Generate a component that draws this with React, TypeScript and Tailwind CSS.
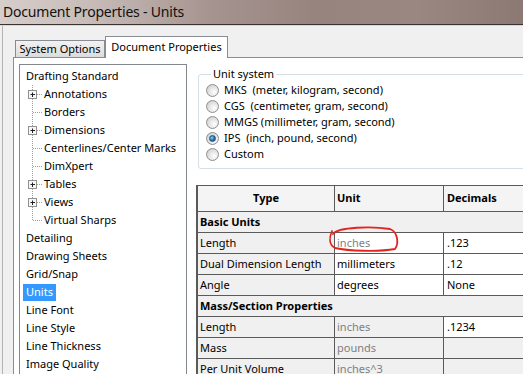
import React from "react";

type TreeItem = { label: string; child?: boolean; plus?: boolean; last?: boolean; selected?: boolean };

const tree: TreeItem[] = [
  { label: "Drafting Standard" },
  { label: "Annotations", child: true, plus: true },
  { label: "Borders", child: true },
  { label: "Dimensions", child: true, plus: true },
  { label: "Centerlines/Center Marks", child: true },
  { label: "DimXpert", child: true },
  { label: "Tables", child: true, plus: true },
  { label: "Views", child: true, plus: true },
  { label: "Virtual Sharps", child: true, last: true },
  { label: "Detailing" },
  { label: "Drawing Sheets" },
  { label: "Grid/Snap" },
  { label: "Units", selected: true },
  { label: "Line Font" },
  { label: "Line Style" },
  { label: "Line Thickness" },
  { label: "Image Quality" },
];

const units = [
  { label: "MKS  (meter, kilogram, second)" },
  { label: "CGS  (centimeter, gram, second)" },
  { label: "MMGS (millimeter, gram, second)" },
  { label: "IPS  (inch, pound, second)", checked: true },
  { label: "Custom" },
];

type Row =
  | { section: string }
  | { type: string; unit: string; unitGray?: boolean; unitBg?: boolean; dec: string; decBg?: boolean };

const rows: Row[] = [
  { section: "Basic Units" },
  { type: "Length", unit: "inches", unitGray: true, dec: ".123" },
  { type: "Dual Dimension Length", unit: "millimeters", dec: ".12" },
  { type: "Angle", unit: "degrees", dec: "None" },
  { section: "Mass/Section Properties" },
  { type: "Length", unit: "inches", unitGray: true, unitBg: true, dec: ".1234" },
  { type: "Mass", unit: "pounds", unitGray: true, unitBg: true, dec: "", decBg: true },
  { type: "Per Unit Volume", unit: "inches^3", unitGray: true, unitBg: true, dec: "", decBg: true },
];

// dotted tree connector, with optional expand box
const Connector = ({ plus, last }: { plus?: boolean; last?: boolean }) => (
  <svg width="24" height="18" className="shrink-0">
    <line x1="12.5" y1="0" x2="12.5" y2={last ? 9 : 18} stroke="#a0a0a0" strokeDasharray="1 1" />
    <line x1="13" y1="9.5" x2="23" y2="9.5" stroke="#a0a0a0" strokeDasharray="1 1" />
    {plus && (
      <g>
        <rect x="8.5" y="5.5" width="8" height="8" fill="#f7f7f7" stroke="#919191" />
        <line x1="10.5" y1="9.5" x2="15" y2="9.5" stroke="#222" />
        <line x1="12.5" y1="7.5" x2="12.5" y2="12" stroke="#222" />
      </g>
    )}
  </svg>
);

const Radio = ({ checked }: { checked?: boolean }) => (
  <span className="w-[13px] h-[13px] rounded-full border border-[#8e8f8f] bg-[radial-gradient(circle_at_65%_65%,#ffffff_0%,#e6e6e6_45%,#c4c4c4_100%)] flex items-center justify-center shrink-0">
    {checked && (
      <span className="w-[7px] h-[7px] rounded-full border border-[#1d4f7a] bg-[radial-gradient(circle_at_35%_35%,#8fd0f5_0%,#2a86c8_45%,#0e3f6e_100%)]" />
    )}
  </span>
);

export default function App() {
  return (
    <div className="relative w-[523px] h-[374px] overflow-hidden bg-[#f0f0f0] font-['Noto_Sans',sans-serif] text-[11px] text-black flex flex-col">
      {/* title bar */}
      <div className="h-[24px] shrink-0 flex items-center pl-[3px] bg-[linear-gradient(90deg,#d6cecb_0%,#c7bbb7_18%,#a69490_40%,#97847f_60%,#9a8782_80%,#8c7974_100%)]">
        <span className="text-[14px] leading-none text-[#111] tracking-[-0.2px]">Document Properties - Units</span>
      </div>
      <div className="h-px bg-[#3a3131] shrink-0" />
      <div className="h-px bg-[#ddd6d4] shrink-0" />

      <div className="flex-1 flex flex-col ml-[2px] border-l border-[#b4b4b4]">
        {/* tabs */}
        <div className="h-[31px] shrink-0 flex items-end pl-[12px]">
          <div className="h-[17px] w-[90px] border border-b-0 border-[#898c95] bg-[linear-gradient(#f2f2f2,#dcdcdc)] flex items-center justify-center">
            System Options
          </div>
          <div className="relative z-10 -mb-px h-[22px] w-[123px] border border-b-0 border-[#898c95] bg-white flex items-center justify-center pb-[1px]">
            Document Properties
          </div>
        </div>

        {/* panel */}
        <div className="flex-1 ml-[10px] border-l border-t border-[#898c95] bg-white flex pt-[6px] pl-[5px]">
          {/* tree */}
          <div className="w-[168px] shrink-0 border border-[#828790] pt-[2px] self-start h-[330px]">
            {tree.map((t, i) =>
              t.child ? (
                <div key={i} className="h-[18px] flex items-center">
                  <Connector plus={t.plus} last={t.last} />
                  <span className="whitespace-nowrap">{t.label}</span>
                </div>
              ) : (
                <div key={i} className="h-[18px] flex items-center pl-[3px]">
                  <span
                    className={`px-[3px] h-[17px] flex items-center whitespace-nowrap ${
                      t.selected ? "bg-[#3399ff] text-white" : ""
                    }`}
                  >
                    {t.label}
                  </span>
                </div>
              )
            )}
          </div>

          {/* right side */}
          <div className="ml-[9px] flex flex-col">
            <fieldset className="ml-[2px] mt-[2px] w-[340px] border border-[#d5dfe5] rounded-[3px] pl-[7px] pb-[6px]">
              <legend className="ml-[5px] px-[2px] leading-[16px]">Unit system</legend>
              {units.map((u, i) => (
                <div key={i} className="h-[16px] flex items-center gap-[5px]">
                  <Radio checked={u.checked} />
                  <span className="whitespace-pre">{u.label}</span>
                </div>
              ))}
            </fieldset>

            <div className="mt-[16px] w-[360px] border-l-2 border-t border-[#5a5a5a] grid grid-cols-[137px_109px_114px]">
              <div className="h-[26px] border-r border-b border-[#5a5a5a] bg-[#f4f4f4] flex items-center justify-center font-bold">
                Type
              </div>
              <div className="h-[26px] border-r border-b border-[#5a5a5a] bg-[#f4f4f4] flex items-center pl-[2px] font-bold">
                Unit
              </div>
              <div className="h-[26px] border-b border-[#5a5a5a] bg-[#f4f4f4] flex items-center pl-[3px] font-bold">
                Decimals
              </div>
              {rows.map((r, i) =>
                "section" in r ? (
                  <div
                    key={i}
                    className="col-span-3 h-[21px] border-b border-[#5a5a5a] bg-[#f0f0f0] flex items-center pl-[2px] font-bold"
                  >
                    {r.section}
                  </div>
                ) : (
                  <React.Fragment key={i}>
                    <div className="h-[21px] border-r border-b border-[#5a5a5a] bg-[#f0f0f0] flex items-center pl-[2px] whitespace-nowrap">
                      {r.type}
                    </div>
                    <div
                      className={`h-[21px] border-r border-b border-[#5a5a5a] flex items-center pl-[2px] ${
                        r.unitBg ? "bg-[#f0f0f0]" : "bg-white"
                      } ${r.unitGray ? "text-[#7f7f7f]" : ""}`}
                    >
                      {r.unit}
                    </div>
                    <div
                      className={`h-[21px] border-b border-[#5a5a5a] flex items-center pl-[3px] ${
                        r.decBg ? "bg-[#f0f0f0]" : "bg-white"
                      }`}
                    >
                      {r.dec}
                    </div>
                  </React.Fragment>
                )
              )}
            </div>
          </div>
        </div>
      </div>

      {/* red hand-drawn annotation */}
      <svg className="absolute left-0 top-0 pointer-events-none" width="523" height="374">
        <path
          d="M333,234 C338,227 372,226 390,229 C398,232 399,244 395,249 C378,252 348,251 335,248 C329,245 329,238 332,231"
          fill="none"
          stroke="#e3241f"
          strokeWidth="1.8"
          strokeLinecap="round"
        />
      </svg>
    </div>
  );
}
